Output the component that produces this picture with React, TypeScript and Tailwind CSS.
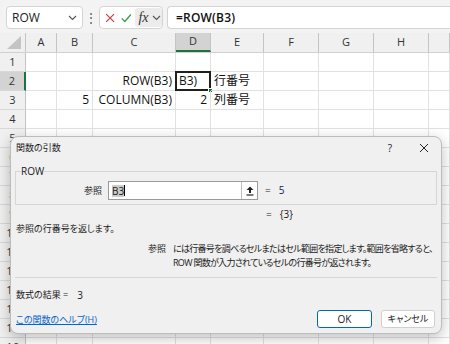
import React from 'react';

const font = "font-['Open_Sans','Noto_Sans_CJK_JP',sans-serif]";
const letters = ['A', 'B', 'C', 'D', 'E', 'F', 'G', 'H', ''];
const gridCols = 'grid grid-cols-[26px_31px_36px_83px_35px_53px_55px_55px_55px_1fr]';

type CellVal = { text: string; align?: 'left' | 'right' };
const data: Record<string, CellVal> = {
  '2-C': { text: 'ROW(B3)', align: 'right' },
  '2-D': { text: 'B3)' },
  '2-E': { text: '行番号' },
  '3-B': { text: '5', align: 'right' },
  '3-C': { text: 'COLUMN(B3)', align: 'right' },
  '3-D': { text: '2', align: 'right' },
  '3-E': { text: '列番号' },
};

function Chevron({ className = '' }: { className?: string }) {
  return (
    <svg width="9" height="6" viewBox="0 0 9 6" className={className}>
      <path d="M1 1 L4.5 4.5 L8 1" fill="none" stroke="#555" strokeWidth="1.1" />
    </svg>
  );
}

function Toolbar() {
  return (
    <div className="flex items-center h-[33px] bg-[#f3f3f3] pt-[2px] pl-[6px]">
      <div className="w-[77px] h-[23px] bg-white border border-[#d4d4d4] rounded-[4px] flex items-center justify-between pl-[5px] pr-[5px]">
        <span className="text-[12px] text-[#222]">ROW</span>
        <Chevron />
      </div>
      <div className="w-[16px] flex justify-center text-[#555] text-[12px] leading-none">⋮</div>
      <div className="w-[64px] h-[23px] bg-white border border-[#d4d4d4] rounded-[4px] flex items-center pl-[3px]">
        <svg width="14" height="14" viewBox="0 0 14 14" className="mx-[1px]">
          <path d="M2.5 2.5 L11.5 11.5 M11.5 2.5 L2.5 11.5" stroke="#d13438" strokeWidth="1.3" />
        </svg>
        <svg width="14" height="14" viewBox="0 0 14 14" className="ml-[3px]">
          <path d="M2 7.5 L5.5 11 L12.5 3" fill="none" stroke="#2f9e44" strokeWidth="1.4" />
        </svg>
        <div className="ml-[3px] h-[19px] w-[30px] bg-[#ececec] rounded-[3px] flex items-center pl-[3px] gap-[3px]">
          <span className="font-['Liberation_Serif',serif] italic text-[14px] text-[#333] leading-none">fx</span>
          <Chevron />
        </div>
      </div>
      <div className="ml-[4px] flex-1 h-[23px] bg-white border border-[#d4d4d4] rounded-l-[4px] border-r-0 flex items-center pl-[8px]">
        <span className="text-[12px] font-semibold text-[#111] tracking-[0.2px]">=ROW(B3)</span>
      </div>
    </div>
  );
}

function HeaderRow() {
  return (
    <div className={`${gridCols} h-[20px] bg-[#f0f0f0] border-b border-[#d0d0d0]`}>
      <div className="border-r border-[#c4c4c4] flex items-end justify-end pr-[4px] pb-[3px]">
        <svg width="14" height="13" viewBox="0 0 14 13">
          <path d="M0 13 L14 13 L14 0 Z" fill="#c4c4c4" />
        </svg>
      </div>
      {letters.map((l, i) => (
        <div
          key={i}
          className={`flex items-center justify-center text-[11px] text-[#333] border-r border-[#c4c4c4] ${
            l === 'D' ? 'bg-[#d3d3d3] border-b-2 border-b-[#1e7145]' : ''
          }`}
        >
          {l}
        </div>
      ))}
    </div>
  );
}

function DataRow({ n }: { n: number }) {
  return (
    <div className={`${gridCols} h-[19px]`}>
      <div
        className={`flex items-center justify-center text-[11px] text-[#333] border-b border-[#d8d8d8] ${
          n === 2 ? 'bg-[#d3d3d3] border-r-2 border-r-[#1e7145]' : 'bg-[#f0f0f0] border-r border-r-[#c4c4c4]'
        }`}
      >
        {n}
      </div>
      {letters.map((l, i) => {
        const v = data[`${n}-${l}`];
        const sel = n === 2 && l === 'D';
        return (
          <div
            key={i}
            className={`relative flex items-center border-r border-b border-[#e1e1e1] px-[3px] text-[12px] text-[#111] whitespace-nowrap ${
              v?.align === 'right' ? 'justify-end' : 'justify-start'
            }`}
          >
            {v?.text}
            {sel && (
              <>
                <div className="absolute -left-px -top-px -right-px -bottom-px border-2 border-[#1f1f1f]" />
                <div className="absolute -right-[3px] -bottom-[3px] w-[5px] h-[5px] bg-[#1e7145] border border-white" />
              </>
            )}
          </div>
        );
      })}
    </div>
  );
}

function UploadIcon() {
  return (
    <svg width="10" height="11" viewBox="0 0 10 11">
      <path d="M5 1.5 L1.5 5 L4 5 L4 8 L6 8 L6 5 L8.5 5 Z" fill="#222" />
      <path d="M1.5 10 L8.5 10" stroke="#222" strokeWidth="1.2" />
    </svg>
  );
}

function Dialog() {
  return (
    <div className="absolute left-[10px] top-[136px] w-[432px] h-[198px] bg-[#f0f0f0] border border-[#bcbcbc] rounded-[8px] shadow-[0_4px_14px_rgba(0,0,0,0.25)] text-[9px] text-[#1a1a1a] [font-feature-settings:'palt'] flex flex-col">
      <div className="h-[20px] flex items-center pl-[5px] pr-[12px] mt-[1px]">
        <span className="flex-1">関数の引数</span>
        <span className="text-[10px] mr-[27px]">?</span>
        <svg width="10" height="10" viewBox="0 0 10 10">
          <path d="M1 1 L9 9 M9 1 L1 9" stroke="#222" strokeWidth="1" />
        </svg>
      </div>
      <fieldset className="mt-[7px] mx-[4px] border border-[#d6d6d6] px-0 pb-[4px]">
        <legend className="ml-[5px] px-0 leading-[12px] text-[10px]">ROW</legend>
        <div className="flex items-center h-[19px] mt-[4px]">
          <span className="w-[87px] text-right pr-[1px]">参照</span>
          <div className="ml-[5px] w-[150px] h-[19px] bg-white border border-[#9a9a9a] flex items-center pl-[3px]">
            <span className="flex-1 flex items-center">
              <span className="bg-[#cccccc] text-[10px] leading-[12px]">B3</span>
              <span className="w-px h-[11px] bg-black" />
            </span>
            <div className="w-[16px] h-[17px] border-l border-[#bdbdbd] flex items-center justify-center">
              <UploadIcon />
            </div>
          </div>
          <span className="ml-[7px] text-[10px]">=</span>
          <span className="ml-[8px] text-[10px] text-[#0c1f5c]">5</span>
        </div>
      </fieldset>
      <div className="h-[14px] mt-[2px] flex items-center pl-[255px] text-[10px]">
        <span>=</span>
        <span className="ml-[8px]">{'{3}'}</span>
      </div>
      <div className="h-[14px] mt-[1px] flex items-center pl-[5px]">参照の行番号を返します。</div>
      <div className="mt-[6px] flex pl-[137px] whitespace-nowrap">
        <span className="w-[25px] leading-[14px]">参照</span>
        <div className="leading-[14px] tracking-[-0.7px]">
          <div>には行番号を調べるセルまたはセル範囲を指定します。範囲を省略すると、</div>
          <div>ROW 関数が入力されているセルの行番号が返されます。</div>
        </div>
      </div>
      <div className="mt-[7px] mx-[4px] border-t border-[#d6d6d6]" />
      <div className="mt-[10px] h-[14px] flex items-center pl-[5px]">
        <span>数式の結果 =</span>
        <span className="ml-[9px] text-[10px]">3</span>
      </div>
      <div className="mt-[8px] h-[18px] flex items-center pl-[5px] pr-[6px]">
        <span className="flex-1 text-[#0066cc] underline mt-[2px]">この関数のヘルプ(H)</span>
        <button className="w-[55px] h-[18px] bg-white border border-[#0067c0] rounded-[3px] text-[10px]">OK</button>
        <button className="ml-[9px] w-[54px] h-[18px] bg-white border border-[#cfcfcf] rounded-[3px]">キャンセル</button>
      </div>
    </div>
  );
}

export default function App() {
  const rows = Array.from({ length: 16 }, (_, i) => i + 1);
  return (
    <div className={`relative w-[450px] h-[344px] overflow-hidden bg-white ${font}`}>
      <Toolbar />
      <HeaderRow />
      {rows.map((n) => (
        <DataRow key={n} n={n} />
      ))}
      <Dialog />
    </div>
  );
}
